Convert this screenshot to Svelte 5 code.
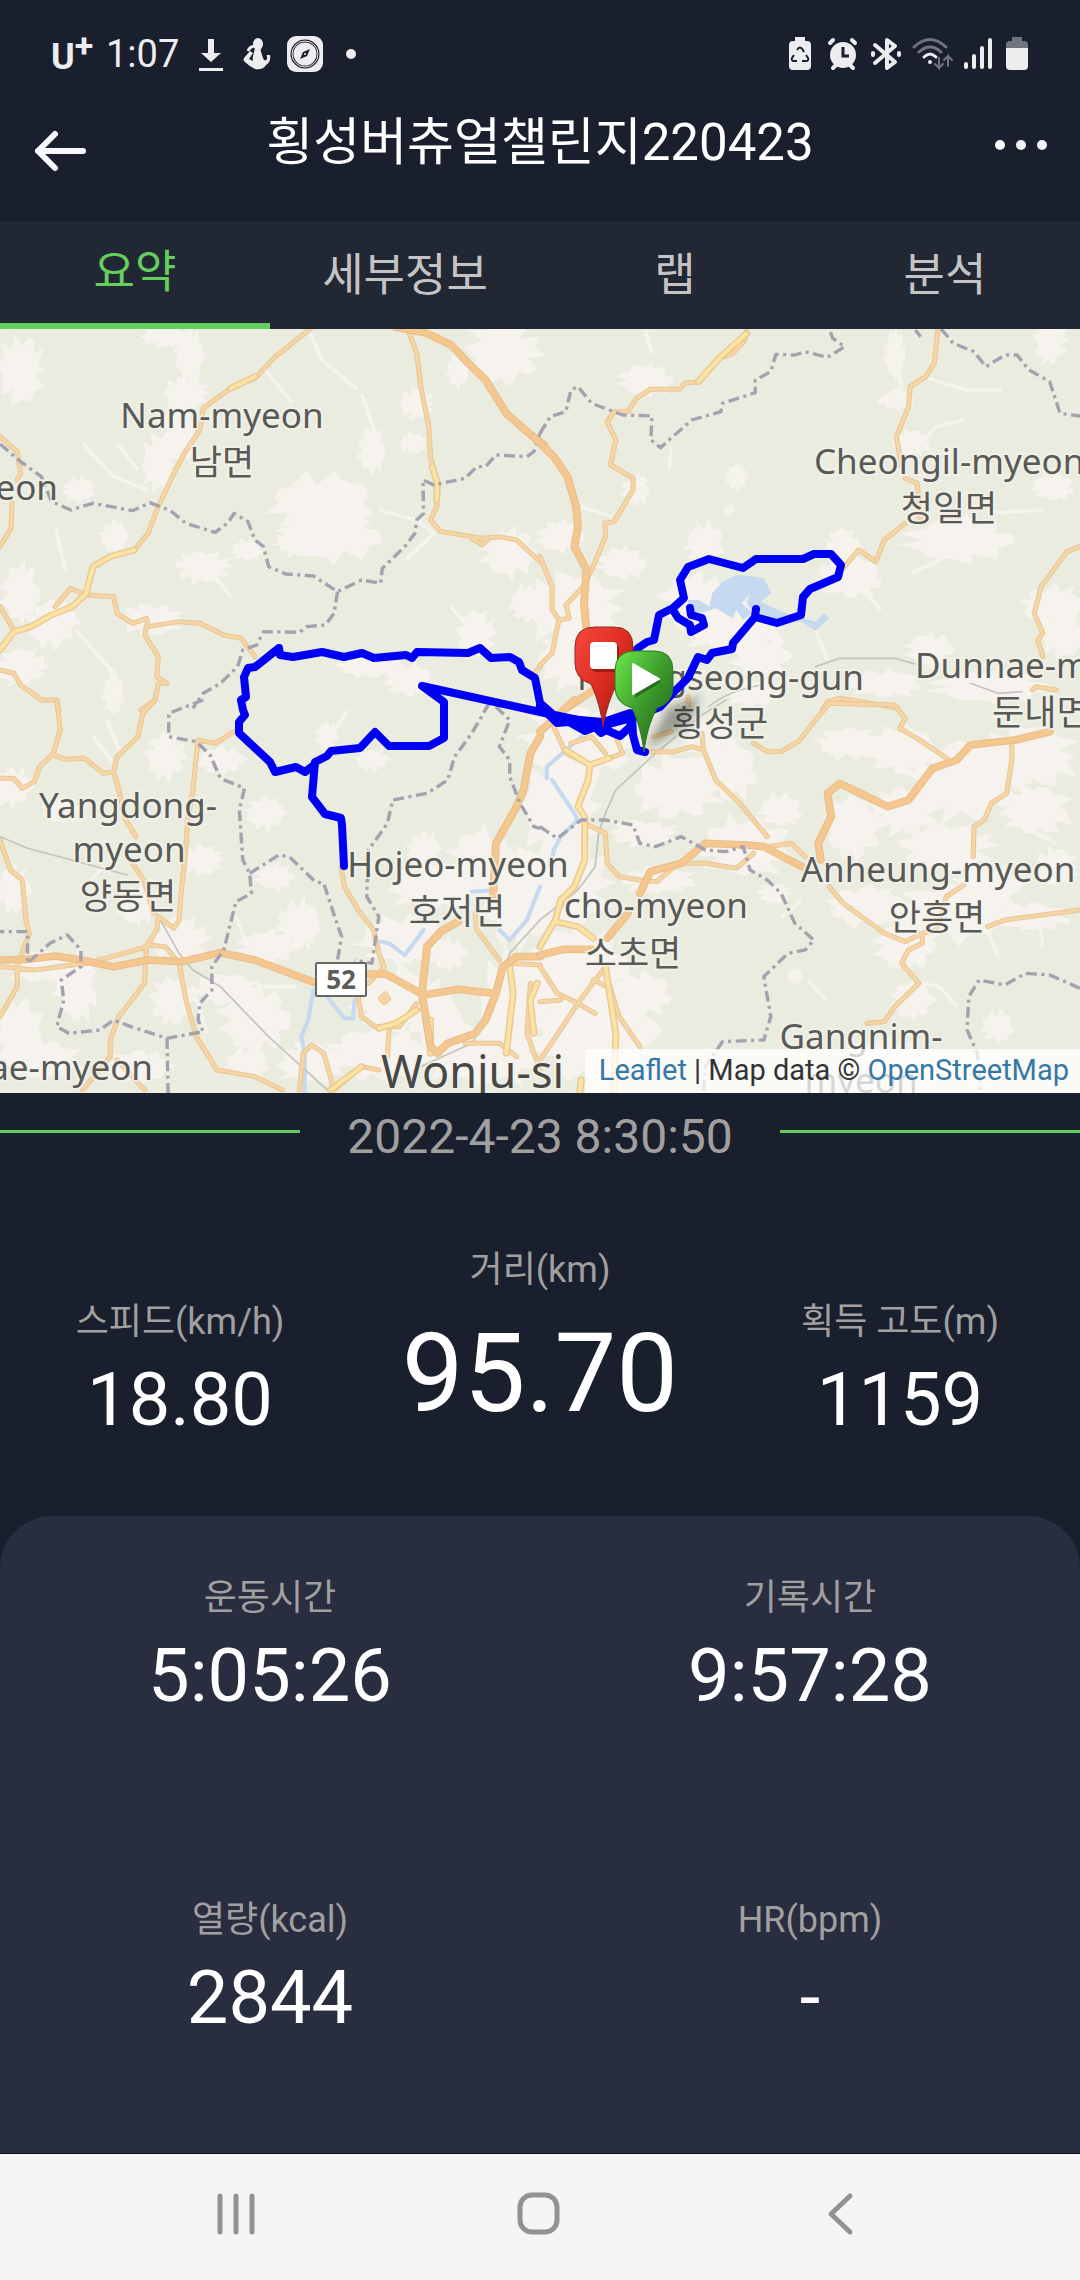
<script lang="ts">
  const tabs = ['요약', '세부정보', '랩', '분석'];
  let active = $state(0);

  const highlights = [
    { label: '스피드(km/h)', value: '18.80', main: false },
    { label: '거리(km)', value: '95.70', main: true },
    { label: '획득 고도(m)', value: '1159', main: false },
  ];

  const details = [
    { label: '운동시간', value: '5:05:26' },
    { label: '기록시간', value: '9:57:28' },
    { label: '열량(kcal)', value: '2844' },
    { label: 'HR(bpm)', value: '-' },
  ];

  // Jagged outline of a valley floor, spurs radiating from its centre.
  function valley([cx, cy, rx, ry]: number[]): string {
    const n = 26;
    let d = '';
    for (let i = 0; i < n; i++) {
      const a = (i / n) * Math.PI * 2 + Math.sin(i * 3.7 + cx) * 0.08;
      const wave = Math.abs(Math.sin(i * 1.9898 + cx * 0.37 + cy * 0.11));
      const r = i % 2 ? 0.5 + 0.3 * wave : 0.55 + 0.42 * wave;
      d += `${i ? 'L' : 'M'}${Math.round(cx + Math.cos(a) * rx * r)} ${Math.round(cy + Math.sin(a) * ry * r)}`;
    }
    return d + 'Z';
  }

  // The map is made of four tiles, each 1568 x 1200 units.
  const tiles = [
    {
      at: 'translate(0 320) scale(.3444 .3333)',
      valleys: [[60, 150, 80, 130], [480, 50, 90, 40], [550, 110, 50, 110], [540, 220, 80, 60], [520, 330, 60, 130], [460, 430, 60, 110], [940, 550, 190, 110], [960, 650, 190, 90], [860, 660, 70, 60], [1460, 100, 130, 120], [1330, 150, 40, 70], [1210, 250, 60, 60], [1080, 390, 50, 90], [590, 740, 100, 60], [60, 820, 70, 110], [150, 910, 90, 90], [440, 900, 110, 60], [1380, 940, 70, 90], [1480, 700, 100, 90], [1070, 1040, 120, 40], [330, 1120, 40, 80], [60, 1040, 90, 70], [1190, 1080, 90, 60], [230, 510, 60, 50], [1200, 370, 50, 40], [720, 690, 60, 40], [330, 650, 50, 60], [1530, 850, 60, 70]],
      streams: 'M770 150L850 250M900 40L935 120L1040 210M1050 220L1085 330M240 370L330 470L430 510M160 620L190 750M340 370L400 450M1100 570L1210 600L1260 640L1180 720M600 740L670 830M1310 860L1400 970M220 930L330 1060',
      major: 'M1150 22L1240 40L1310 75L1360 130L1410 180L1470 280L1530 335L1580 375',
      roads: 'M900 27L800 110L740 175L670 205L590 265L580 330L535 400L500 470L455 570L430 640L390 690M0 350L50 395L60 460L50 480M35 550L32 625L0 680M0 860L40 930M160 860L205 805L250 825L330 830L340 880L385 910L425 895L430 920L520 905L580 910L650 945L700 955L740 1010M425 920L420 945L460 1010L455 1070L485 1090L460 1090L450 1140L410 1170M0 1050L40 1060L60 1095L120 1140L165 1140L170 1170M1185 30L1210 100L1222 200L1245 320L1250 410L1270 490L1268 560L1250 600L1280 635L1400 655L1450 650L1500 660L1568 725M1370 655L1400 675L1420 655M1568 1040L1550 1060',
      yellow: 'M390 690L320 710L270 740L250 820L210 860L150 885L90 920L40 935L0 990M1255 440L1270 490L1268 540M740 170L670 205',
      borders: 'M0 372L60 425L120 470L150 545L205 570L270 550L385 572L435 548L495 572L540 610L625 637L660 610L680 580L720 605L740 660L765 680L780 740L830 762L910 768L980 815L1050 780L1105 790L1110 745L1175 680L1205 640L1210 600L1230 580L1228 480L1260 495L1350 475L1385 440L1410 440L1440 405L1530 410L1550 395L1568 340M980 815L970 880L945 915L890 920L870 937L765 935L745 975L705 990L690 1040L640 1090L590 1120L560 1165',
      rails: '', rivers: '', lake: '',
    },
    {
      at: 'translate(540 320) scale(.3444 .3333)',
      valleys: [[310, 180, 100, 60], [1480, 60, 60, 90], [1030, 100, 40, 90], [570, 470, 40, 50], [550, 570, 20, 20], [480, 670, 70, 80], [1220, 660, 200, 80], [1490, 500, 80, 50], [280, 510, 50, 60], [60, 650, 90, 60], [240, 730, 90, 60], [100, 870, 170, 140], [560, 920, 190, 100], [450, 850, 130, 110], [900, 770, 120, 80], [1490, 860, 110, 80], [1520, 950, 80, 80], [640, 1010, 110, 80], [90, 1020, 120, 110], [1130, 990, 90, 60], [880, 680, 60, 70], [1080, 370, 70, 50], [1310, 1100, 220, 60], [1000, 1090, 140, 50], [620, 1120, 100, 50], [1040, 240, 60, 40]],
      streams: 'M305 30L325 100M380 380L375 450M1110 170L1240 210L1340 210M1030 110L1050 200L980 250M1080 400L1150 320L1230 300M120 560L210 590M900 770L990 870M800 930L835 1020M1300 580L1460 570M1080 760L1220 690',
      major: 'M-20 350L0 370L40 410L80 470L105 560L110 620L100 680L135 750L128 850L135 930M170 1100L70 1170',
      roads: 'M600 27L595 60L560 100L520 115L460 185L420 190L405 208L320 208L280 235L255 275L215 275L195 305L220 360L205 435L270 475L270 510L215 605L188 610L190 650L170 700L150 750L125 800L75 855L85 895L55 900L35 1000L0 1035M0 710L35 800L35 870L55 900M1155 30L1145 130L1120 170L1075 200L1070 260L1035 350L1050 440M1060 475L1095 490L1105 610M1060 610L1000 660L975 725L925 690L880 745M1568 680L1530 695L1455 800L1435 880L1460 940L1445 960L1460 1010M820 1170L835 1145L870 1135L930 1145L1040 1165M1430 1110L1440 1100L1500 1110M430 1130L430 1170',
      yellow: 'M600 40L520 115L460 185',
      borders: 'M0 340L30 290L75 275L90 210L110 200L150 250L240 285L325 288L322 360L350 383L440 300L525 275L530 250L625 218L625 180L670 155L685 103L740 105L770 95L835 112L885 80L850 55L840 27M1105 50L1090 30M1165 27L1200 70L1260 95L1295 140L1350 105L1385 105L1420 150L1480 185L1510 280L1568 288',
      rails: 'M800 1040L870 1015L1030 1015L1090 1032M1250 1090L1330 1120L1400 1115M490 1160Q540 1115 640 1095',
      rivers: '',
      lake: 'M430 840L460 840L492 860L500 820L530 785L570 765L610 768L650 775L672 820L640 845L680 865L740 890L800 905L825 880L840 895L800 933L760 905L700 905L640 880L610 885L590 900L570 870L560 895L510 865L480 875L430 880ZM585 850L610 820L600 850L620 880Z',
    },
    {
      at: 'translate(0 700) scale(.3444 .3333)',
      valleys: [[30, 260, 80, 70], [180, 330, 70, 50], [950, 110, 40, 60], [1080, 180, 60, 40], [640, 180, 90, 50], [480, 170, 70, 90], [800, 530, 70, 50], [870, 670, 80, 90], [780, 740, 110, 60], [520, 720, 100, 90], [220, 860, 80, 130], [120, 800, 140, 60], [60, 1000, 90, 130], [130, 1080, 140, 70], [740, 960, 130, 120], [660, 870, 120, 60], [500, 900, 80, 90], [1230, 450, 60, 70], [1270, 560, 180, 90], [1400, 480, 120, 120], [1500, 600, 140, 170], [1170, 720, 160, 90], [1150, 900, 160, 120], [1100, 1060, 180, 100], [1400, 1060, 240, 120], [1500, 900, 130, 190], [1300, 760, 70, 60], [770, 340, 70, 60], [720, 1090, 80, 60], [900, 1090, 120, 80], [400, 1100, 120, 60], [40, 570, 60, 90], [400, 620, 70, 70], [590, 480, 70, 60], [1260, 950, 90, 130]],
      streams: 'M350 160L310 60M270 110L330 190M850 650L900 750M560 860L600 1000M680 640L720 740M300 500L250 560M700 920L760 860L860 860M1010 30L960 110',
      major: 'M0 780L80 778L160 768L235 780L330 800L430 780L530 785L640 758L740 780L920 850M1060 822L1120 822L1230 885L1330 868L1430 880M1568 110L1540 160L1520 270L1500 320L1440 430L1432 590M1330 665L1280 695L1240 740L1225 880L1250 1040L1270 1060L1300 1030L1380 1000L1410 960L1440 880L1460 800L1500 770L1568 770',
      roads: 'M165 0L175 90L155 160L115 200L100 245L65 265L40 235L0 235M155 165L190 178L245 175L300 220L330 215L340 170L400 110L415 40L450 0M330 215L345 270L365 360L395 410M385 490L420 545L445 640M680 95L625 130L575 120L560 270L545 360L540 440L525 590L520 660L505 685L460 650L455 690L425 740L420 850L345 950L320 1020L320 1070L240 1170M0 420L30 510L65 540L75 660L85 700L50 800L50 860L0 950M425 740L360 760L250 790L100 810L0 800M430 735L480 740L520 790L540 900L570 1010L630 1110L740 1130L820 1170M990 500L1000 560L1040 630L1085 690L1100 760L1115 800L1070 850M1040 890L1050 950L1090 980L1160 980L1210 910M1130 980L1125 1070M870 1170L880 1060L905 1035L940 1060L970 1170L1050 1100L1100 1110M1380 640L1385 690L1450 780M1540 850L1530 1000L1568 1110M1105 895L1118 882L1128 897L1116 908ZM1480 790L1568 795M1350 1030L1450 1030L1500 1070M340 1080L420 1170',
      yellow: 'M1480 800L1490 880L1470 1060M1100 985L1150 970L1210 930M1560 850L1540 900L1550 1000M1250 960L1250 1060M960 1170L1050 1100',
      borders: 'M590 0L490 40L490 110L570 125L610 165L640 235L710 265L695 330L705 480L725 520L730 580L685 605L650 750L615 800L615 870L580 910L575 960L590 995L485 1015L380 980L330 960L290 990L200 1000L165 980L185 900L178 840L235 800L235 750L195 705L145 730L80 790L80 695L0 695M485 1015L488 1180M725 520L810 465L840 470L915 545L940 550L975 660L992 710L980 780M1420 10L1370 100L1320 170L1300 240L1240 280L1140 300L1125 370L1070 450L1065 590L1100 650L1080 790L1030 780M1440 20L1480 60L1450 140L1480 180L1480 230L1510 310L1550 380L1568 385',
      rails: 'M0 410L80 445L370 525M455 640L520 760L560 810L640 860L780 1010L950 1170M1568 660L1480 760L1420 940L1370 1030L1200 1110',
      rivers: 'M1568 560L1530 660L1480 720L1450 690M1370 575L1440 570M1230 690L1175 765L1130 730L1105 725M910 870L895 960L875 1010L885 1060L885 1180M950 890L1000 955L1025 955L1030 900',
      lake: '',
    },
    {
      at: 'translate(540 700) scale(.3444 .3333)',
      valleys: [[110, 130, 200, 140], [60, 320, 140, 200], [60, 550, 180, 180], [400, 260, 160, 120], [540, 210, 120, 110], [300, 400, 120, 50], [600, 440, 170, 110], [700, 330, 80, 60], [1240, 240, 200, 150], [1420, 170, 170, 120], [1050, 150, 130, 90], [900, 130, 120, 60], [1440, 330, 130, 90], [1060, 330, 120, 90], [910, 380, 100, 120], [1180, 440, 170, 90], [950, 620, 140, 80], [1190, 640, 200, 110], [1300, 560, 120, 90], [1420, 650, 160, 50], [1060, 740, 110, 90], [100, 800, 200, 150], [150, 1000, 230, 180], [290, 880, 120, 80], [350, 540, 140, 50], [1330, 980, 60, 60], [1080, 900, 80, 70], [1000, 1080, 170, 80], [1120, 1100, 120, 60], [1290, 1100, 80, 60], [500, 120, 100, 60], [1500, 500, 80, 70], [680, 580, 60, 40], [740, 830, 30, 30]],
      streams: 'M780 840L830 900M1110 850L1160 860L1210 920M1300 690L1330 770M1450 660L1460 740M700 650L760 600M1400 380L1500 430',
      major: 'M290 580L320 515L410 490L480 430L600 435L650 440L760 500M815 480L808 430L845 350L835 280L870 250L940 285L1010 320L1070 300L1140 205L1210 180L1250 135L1380 120L1480 95M255 640L195 715M0 765L70 748L150 748M100 0L0 95',
      roads: 'M40 80L75 160L145 195L240 160L220 110M90 130L150 110L190 160M60 620L100 560M130 370L190 400L195 490L230 530L290 540L340 545L400 490L480 490L570 505L620 460M300 155L390 155L440 140L475 150L510 240L580 310L660 410M660 440L730 430L770 470M475 150L470 100M430 0L430 20M620 130L660 155L700 155L750 125L800 60L840 10L1030 15L1060 55L1045 85L1110 125L1180 175M1370 120L1370 180L1355 280L1310 310L1290 360L1260 380L1258 470M1230 555L1180 590L1150 690L1110 700M840 560L880 610L1000 700L1060 725L1110 700L1110 730L1070 750L1050 790L1100 850L1030 920L1000 965L950 970M1300 680L1350 660L1568 630M0 800L50 880L110 910L160 940M190 800L110 910L40 1020L0 1080M200 850L230 950L290 1040M0 905L60 900M155 840L195 860M330 110L380 95',
      yellow: 'M145 195L140 240L110 320L130 350L130 480L100 560L60 600L45 660L0 740M45 665L110 680L155 715M190 800L220 1000L215 1170M75 150L145 195L200 175M120 1140L115 1180',
      borders: 'M0 380L50 415L120 360L190 360L270 375L290 430L335 440L410 410L480 450L540 455L590 440L610 510L660 540L700 580L740 670L795 720L770 750L720 760L650 830L670 950L650 1020L530 1025L480 1100L475 1180M1568 865L1480 825L1410 820L1350 855L1275 840L1245 890L1240 990L1270 1060L1280 1180',
      rails: 'M540 0L470 45L330 165L220 270L190 340L170 400L160 500L110 570L0 660',
      rivers: 'M120 110L20 200L20 235M35 240L100 340L110 360L60 410L40 450L30 500',
      lake: '',
    },
  ];

  const places = [
    { x: 222, y: 428, text: 'Nam-myeon', anchor: 'middle' },
    { x: 222, y: 475, text: '남면', anchor: 'middle' },
    { x: 58, y: 500, text: 'eon', anchor: 'end' },
    { x: 814, y: 474, text: 'Cheongil-myeon', anchor: 'start' },
    { x: 949, y: 521, text: '청일면', anchor: 'middle' },
    { x: 915, y: 678, text: 'Dunnae-myeon', anchor: 'start' },
    { x: 992, y: 725, text: '둔내면', anchor: 'start' },
    { x: 864, y: 690, text: 'Hoengseong-gun', anchor: 'end' },
    { x: 720, y: 736, text: '횡성군', anchor: 'middle' },
    { x: 128, y: 818, text: 'Yangdong-', anchor: 'middle' },
    { x: 129, y: 862, text: 'myeon', anchor: 'middle' },
    { x: 128, y: 909, text: '양동면', anchor: 'middle' },
    { x: 458, y: 877, text: 'Hojeo-myeon', anchor: 'middle' },
    { x: 457, y: 924, text: '호저면', anchor: 'middle' },
    { x: 748, y: 918, text: 'cho-myeon', anchor: 'end' },
    { x: 633, y: 966, text: '소초면', anchor: 'middle' },
    { x: 938, y: 882, text: 'Anheung-myeon', anchor: 'middle' },
    { x: 937, y: 930, text: '안흥면', anchor: 'middle' },
    { x: 861, y: 1049, text: 'Gangnim-', anchor: 'middle' },
    { x: 861, y: 1093, text: 'myeon', anchor: 'middle' },
    { x: 153, y: 1080, text: 'ae-myeon', anchor: 'end' },
  ];
</script>

<div class="screen">
  <div class="status">
    <div class="left">
      <span class="carrier">U<sup>+</sup></span>
      <span class="clock">1:07</span>
      <div class="notes">
        <svg width="36" height="36" viewBox="0 0 36 36" fill="#ededf0"><path d="M15 3h6v14h7L18 26 8 17h7zM6 32h24v3H6z" /></svg>
        <svg width="36" height="36" viewBox="0 0 36 36" fill="#ededf0">
          <ellipse cx="18" cy="8" rx="5" ry="6" />
          <path d="M15 12h6c-1 3 1 6 2 10 1 3 3 3 4 1 1-2-1-3 0-4l3 0c1 5-1 8-4 10-2 4-7 5-11 4-4-2-8-5-11-8-1-1 0-2 0-3l6-7 3 2-4 6 4 2c-1-4 1-8 2-13z" />
          <path d="M8 15c1-3 4-5 8-5" fill="none" stroke="#ededf0" stroke-width="3" />
        </svg>
        <svg width="36" height="36" viewBox="0 0 36 36"><rect width="36" height="36" rx="9" fill="#ededf0" /><circle cx="18" cy="18" r="13" fill="none" stroke="#1a1f2d" stroke-width="3" /><circle cx="18" cy="18" r="13" fill="none" stroke="#ededf0" stroke-width="1" /><path d="M23 13l-3 7-7 3 3-7z" fill="#1a1f2d" /><circle cx="18" cy="18" r="1" fill="#ededf0" /></svg>
        <svg width="36" height="36" viewBox="0 0 36 36"><circle cx="17" cy="18" r="5" fill="#ededf0" /></svg>
      </div>
    </div>
    <div class="right">
      <svg width="34" height="36" viewBox="0 0 34 36"><path d="M12 1h10v4h2q4 0 4 4v21q0 4-4 4H10q-4 0-4-4V9q0-4 4-4h2z" fill="#ededf0" /><path d="M14 14q3-5 6 0l1 2M11 19l-2 3q-1 3 2 3h3M23 19l2 3q1 3-2 3h-4" fill="none" stroke="#1a1f2d" stroke-width="2" /></svg>
      <svg width="34" height="36" viewBox="0 0 34 36"><g stroke="#ededf0" stroke-width="4" stroke-linecap="round"><path d="M4 7l3-3M29 7l-3-3M7 32l4-4M27 32l-4-4" /></g><circle cx="17" cy="19" r="13" fill="#ededf0" /><path d="M17 11v9h6" fill="none" stroke="#1a1f2d" stroke-width="3" /></svg>
      <svg width="34" height="36" viewBox="0 0 34 36" fill="none" stroke="#ededf0" stroke-width="4" stroke-linecap="round" stroke-linejoin="round"><path d="M6 9l20 17-8 6V4l8 6L6 27" /><path d="M4 17v2M30 17v2" /></svg>
      <svg width="42" height="36" viewBox="0 0 42 36" fill="none" stroke-width="3" stroke-linecap="round"><path d="M2 11Q18-4 34 11M7 16Q18 6 29 16" stroke="#70747f" /><path d="M12 21Q18 15 24 21" stroke="#ededf0" /><circle cx="18" cy="26" r="2" fill="#ededf0" stroke="none" /><path d="M27 22v10l-4-4M27 32l4-4M36 30V20l-4 4M36 20l4 4" stroke="#70747f" stroke-width="2" /></svg>
      <svg width="30" height="36" viewBox="0 0 30 36" stroke="#ededf0" stroke-width="4" stroke-linecap="round"><path d="M3 28v3M11 20v11M19 12v19M27 4v27" /></svg>
      <svg width="30" height="36" viewBox="0 0 30 36"><path d="M10 1h10v4h2q4 0 4 4v3H4V9q0-4 4-4h2z" fill="#70747f" /><path d="M4 12h22v18q0 4-4 4H8q-4 0-4-4z" fill="#ededf0" /></svg>
    </div>
  </div>

  <header>
    <button class="back" aria-label="뒤로">
      <svg width="56" height="44" viewBox="0 0 56 44" fill="none" stroke="#f7f8fc" stroke-width="6" stroke-linecap="round" stroke-linejoin="round"><path d="M23 5L6 22l17 17M6 22h45" /></svg>
    </button>
    <h1>횡성버츄얼챌린지220423</h1>
    <button class="more" aria-label="더보기">
      <svg width="56" height="12" viewBox="0 0 56 12" fill="#f4f5f8"><circle cx="8" cy="6" r="5" /><circle cx="29" cy="6" r="5" /><circle cx="50" cy="6" r="5" /></svg>
    </button>
  </header>

  <div class="tabs" role="tablist">
    {#each tabs as tab, i}
      <button role="tab" aria-selected={active === i} class:active={active === i} onclick={() => (active = i)}>{tab}</button>
    {/each}
  </div>

  <div class="map">
    <svg viewBox="0 329 1080 764" role="img" aria-label="지도">
      <defs>
        <linearGradient id="red" x1="0" y1="0" x2="1" y2="1"><stop offset="0" stop-color="#f8483c" /><stop offset=".5" stop-color="#dd2c22" /><stop offset="1" stop-color="#8e1712" /></linearGradient>
        <linearGradient id="green" x1="0" y1="0" x2="1" y2="1"><stop offset="0" stop-color="#6ce848" /><stop offset=".5" stop-color="#3c9a2c" /><stop offset="1" stop-color="#1d5716" /></linearGradient>
        <filter id="soft" x="-50%" y="-50%" width="200%" height="200%"><feGaussianBlur stdDeviation="5" /></filter>
      </defs>
      <rect y="329" width="1080" height="764" fill="#e9ecdf" />
      {#each tiles as t}
        <g transform={t.at} fill="none" stroke-linejoin="round">
          {#each t.valleys as v}<path d={valley(v)} fill="#f6f3ee" />{/each}
          <path d={t.streams} stroke="#f6f3ee" stroke-width="11" />
        </g>
      {/each}
      {#each tiles as t}
        <g transform={t.at} fill="none" stroke-linejoin="round" stroke-linecap="round">
          <path d={t.lake} fill="#c5d9f0" fill-rule="evenodd" />
          <path d={t.rivers} stroke="#c5d9f0" stroke-width="12" />
          <path d={t.rails} stroke="#c3c3c0" stroke-width="5" />
          <path d={t.roads} stroke="#ecc594" stroke-width="15" />
          <path d={t.roads} stroke="#f4d6a6" stroke-width="9" />
          <path d={t.yellow} stroke="#ebc68f" stroke-width="20" />
          <path d={t.yellow} stroke="#fae3a4" stroke-width="12" />
          <path d={t.major} stroke="#eabd86" stroke-width="23" />
          <path d={t.major} stroke="#f3c78f" stroke-width="17" />
          <path d={t.borders} stroke="#a5a2b0" stroke-width="10" stroke-linecap="butt" stroke-dasharray="32 13 9 13" />
        </g>
      {/each}

      <g class="places">
        {#each places as p}<text x={p.x} y={p.y} text-anchor={p.anchor}>{p.text}</text>{/each}
        <text class="city" x="381" y="1088">Wonju-si</text>
      </g>
      <rect x="316" y="963" width="50" height="33" rx="1" fill="#fff" stroke="#666" stroke-width="2" />
      <text class="shield" x="341" y="989" text-anchor="middle">52</text>

      <g fill="none" stroke="#0000f5" stroke-width="8" stroke-linejoin="round" stroke-linecap="round">
        <path d="M630 713L603 722L557 718L540 703L535 678L522 670L519 662L510 657L491 658L480 648L468 653L417 652L412 658L406 655L374 658L362 653L344 657L322 652L293 657L280 655L279 648L255 667L248 668L244 677L246 697L241 700L243 710L245 715L239 722L239 733L270 762L275 772L296 767L305 772L314 765" />
        <path d="M602 725L540 712L422 686L444 702V738L429 746H389L375 732L360 748L331 751L327 756L315 762L312 797L325 814L341 818L342 825L344 866" />
        <path d="M540 706L557 723L569 722L585 731L595 727L601 733L606 730L620 736L630 727L632 716L633 735L637 750L645 752M550 716L602 726L632 718" />
        <path d="M628 660L638 648L647 642L654 640L659 615L673 608L684 598L680 580L688 567L709 559L743 568L756 559H803L814 554H831L841 565L838 577L810 589L803 597L801 615L777 623L755 617L756 609L755 617L733 643L732 649L712 653L707 660L698 657L688 678L673 693L660 707L632 718" />
        <path d="M673 610L678 618L690 625L691 632L704 625L702 618L691 615L690 608" />
      </g>

      <path d="M646 750L668 708L700 696L690 722Z" fill="#222" opacity=".4" filter="url(#soft)" />
      <path d="M603 727C601 711 597 697 591 684Q575 679 575 663V647Q575 627 595 627H614Q633 627 633 647V663Q633 679 617 684C610 697 606 711 603 727Z" fill="url(#red)" stroke="#8c2a24" />
      <rect x="592" y="645" width="27" height="27" rx="4" fill="#5c100c" opacity=".5" />
      <rect x="590" y="642" width="27" height="27" rx="4" fill="#fff" />
      <path d="M644 752C642 735 638 721 632 708Q615 703 615 687V671Q615 651 635 651H654Q673 651 673 671V687Q673 703 657 708C650 721 646 735 644 752Z" fill="url(#green)" stroke="#2b7a22" />
      <path d="M635 667L661 682L635 698Z" fill="#123d0c" opacity=".5" />
      <path d="M633 664L659 679L633 694Z" fill="#fff" stroke="#fff" stroke-width="2" stroke-linejoin="round" />
    </svg>
    <div class="credit"><a href="#leaflet">Leaflet</a> | Map data © <a href="#osm">OpenStreetMap</a></div>
  </div>

  <div class="date"><i></i><time datetime="2022-04-23T08:30:50">2022-4-23 8:30:50</time><i></i></div>

  <section class="highlights">
    {#each highlights as h}
      <div class="stat" class:main={h.main}>
        <span class="label">{h.label}</span>
        <span class="value">{h.value}</span>
      </div>
    {/each}
  </section>

  <section class="details">
    {#each details as d}
      <div class="stat">
        <span class="label">{d.label}</span>
        <span class="value">{d.value}</span>
      </div>
    {/each}
  </section>

  <nav>
    <button aria-label="최근 앱"><svg width="48" height="48" viewBox="0 0 48 48" stroke="#929292" stroke-width="5" stroke-linecap="round"><path d="M6 6v36M22 6v36M38 6v36" /></svg></button>
    <button aria-label="홈"><svg width="48" height="48" viewBox="0 0 48 48" fill="none" stroke="#929292" stroke-width="5"><rect x="4" y="5" width="37" height="37" rx="12" /></svg></button>
    <button aria-label="이전"><svg width="48" height="48" viewBox="0 0 48 48" fill="none" stroke="#929292" stroke-width="5" stroke-linecap="round" stroke-linejoin="round"><path d="M32 6L13 24l19 18" /></svg></button>
  </nav>
</div>

<style>
  :global(body) {
    margin: 0;
    background: #1a1f2d;
  }
  .screen {
    min-height: 100vh;
    display: flex;
    flex-direction: column;
    background: #1a1f2d;
    color: #fff;
    font-family: Roboto, 'Noto Sans CJK KR', sans-serif;
  }
  button {
    border: 0;
    padding: 0;
    background: none;
    color: inherit;
    font: inherit;
    display: flex;
    align-items: center;
    justify-content: center;
  }
  svg {
    display: block;
  }
  .status {
    height: 108px;
    padding: 0 48px 0 51px;
    display: flex;
    align-items: center;
    justify-content: space-between;
    color: #ededf0;
  }
  .left,
  .right,
  .notes {
    display: flex;
    align-items: center;
  }
  .right {
    gap: 9px;
  }
  .notes {
    gap: 11px;
  }
  .carrier {
    font-size: 36px;
    font-weight: 700;
    line-height: 44px;
    width: 55px;
    padding-top: 6px;
  }
  .carrier sup {
    font-size: 34px;
    line-height: 0;
    vertical-align: 12px;
  }
  .clock {
    font-size: 38px;
    line-height: 44px;
    width: 87px;
  }
  header {
    height: 113px;
    padding: 0 32px;
    display: flex;
    align-items: flex-start;
    justify-content: space-between;
  }
  .back {
    height: 86px;
  }
  .more {
    height: 74px;
  }
  h1 {
    margin: 0;
    font-size: 51px;
    line-height: 70px;
    font-weight: 400;
  }
  .tabs {
    height: 108px;
    display: grid;
    grid-template-columns: repeat(4, 1fr);
    background: #222734;
  }
  .tabs button {
    box-sizing: border-box;
    padding-top: 2px;
    color: #c4c4c4;
    font-size: 45px;
    line-height: 60px;
  }
  .tabs .active {
    color: #65cf5e;
    border-bottom: 6px solid #65cf5e;
  }
  .map {
    position: relative;
    overflow: hidden;
  }
  .map svg {
    width: 100%;
    height: auto;
  }
  .places {
    font-family: 'Noto Sans', 'Noto Sans CJK KR', sans-serif;
    font-size: 35px;
    fill: #595957;
    stroke: #f4f3ec;
    stroke-width: 4px;
    stroke-opacity: 0.7;
    paint-order: stroke;
  }
  .places .city {
    font-size: 45px;
    fill: #484846;
  }
  .shield {
    font: 700 26px 'Noto Sans', sans-serif;
    fill: #5c5c5a;
  }
  .credit {
    position: absolute;
    right: 0;
    bottom: 0;
    padding: 0 11px 2px 14px;
    background: rgba(255, 255, 255, 0.75);
    color: #333;
    font-size: 29px;
    line-height: 42px;
  }
  .credit a {
    color: #3478a5;
    text-decoration: none;
  }
  .date {
    display: flex;
    gap: 47px;
    color: #a0a0a0;
    font-size: 48px;
    line-height: 88px;
  }
  .date i {
    flex: 1;
    height: 3px;
    margin-top: 37px;
    background: #65cf5e;
  }
  .highlights {
    display: grid;
    grid-template-columns: repeat(3, 1fr);
    align-items: end;
    padding: 65px 0 72px;
  }
  .stat {
    display: flex;
    flex-direction: column;
    align-items: center;
    gap: 10px;
  }
  .label {
    color: #a0a0a0;
    font-size: 36px;
    line-height: 48px;
  }
  .value {
    font-size: 74px;
    line-height: 88px;
  }
  .main .value {
    font-size: 110px;
    line-height: 140px;
  }
  .details {
    flex: 1;
    display: grid;
    grid-template-columns: 1fr 1fr;
    align-content: start;
    row-gap: 176px;
    padding: 58px 0 109px;
    background: #282d3f;
    border-radius: 52px 52px 0 0;
    border-bottom: 1px solid #0b0d14;
  }
  nav {
    display: flex;
    justify-content: center;
    padding-bottom: 6px;
    background: #f5f5f5;
  }
  nav button {
    width: 28%;
    height: 120px;
  }
</style>
